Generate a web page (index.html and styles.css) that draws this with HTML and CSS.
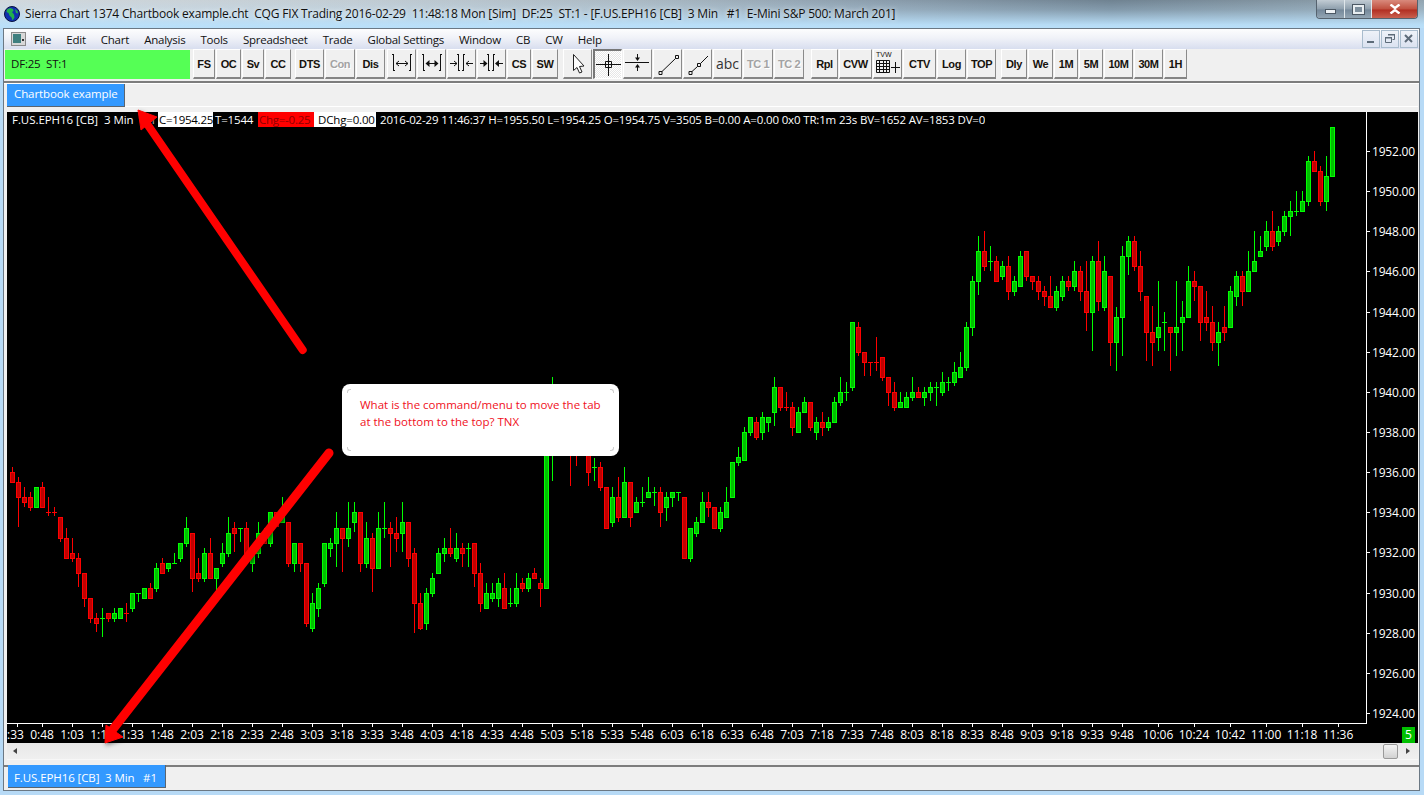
FILE: index.html
```html
<!DOCTYPE html>
<html lang="en">
<head>
<meta charset="utf-8">
<title>Sierra Chart</title>
<link rel="stylesheet" href="styles.css">
</head>
<body>
<div class="window">
  <header class="titlebar">
    <svg class="globe" viewBox="0 0 16 16" width="16" height="16"><circle cx="8" cy="8" r="7.500" fill="#1030b0"/><path d="M3 3.500 6 2l3 1 .5 2-1.500 1 2 2.500 .5 3-2 3-1-3-2-2-1-2.500-2-1z" fill="#22b14c"/><path d="M11 3l2.500 2 .5 2.500-2-.5z" fill="#22b14c"/><circle cx="8" cy="8" r="7.500" fill="none" stroke="#071040"/></svg>
    <span class="title-text">Sierra Chart 1374 Chartbook example.cht  CQG FIX Trading 2016-02-29  11:48:18 Mon [Sim]  DF:25  ST:1 - [F.US.EPH16 [CB]  3 Min   #1  E-Mini S&amp;P 500: March 201]</span>
    <div class="caption">
      <div class="cap cap-min"><i class="glyph-min"></i></div>
      <div class="cap cap-max"><i class="glyph-max"></i></div>
      <div class="cap cap-close">
        <svg viewBox="0 0 12 10" width="12" height="10"><path d="M1.500 .5 6 4 10.500 .5M1.500 9.500 6 6 10.500 9.500" fill="none" stroke="#fff" stroke-width="2.400"/></svg>
      </div>
    </div>
  </header>

  <div class="frame">
    <nav class="menubar">
      <svg class="sysicon" viewBox="0 0 15 14" width="15" height="14"><rect x=".5" y=".5" width="14" height="13" fill="#d8d8d8" stroke="#8a8a8a"/><rect x="2" y="2" width="8" height="9" fill="#3f7f7f"/><rect x="11" y="7" width="2" height="2" fill="#333"/></svg>
      <span class="menu">File</span><span class="menu">Edit</span><span class="menu">Chart</span><span class="menu">Analysis</span><span class="menu">Tools</span><span class="menu">Spreadsheet</span><span class="menu">Trade</span><span class="menu">Global Settings</span><span class="menu">Window</span><span class="menu">CB</span><span class="menu">CW</span><span class="menu">Help</span>
      <div class="mdi">
        <div class="mdi-btn"><svg viewBox="0 0 16 16" width="16" height="16"><rect x="4" y="10" width="7" height="2" fill="#5d6b79"/></svg></div>
        <div class="mdi-btn"><svg viewBox="0 0 16 16" width="16" height="16"><path d="M6.500 3.500h6v5h-2M3.500 6.500h6v5h-6z" fill="none" stroke="#5d6b79"/><path d="M6 3h7v1.500H6zM3 6h7v1.500H3z" fill="#5d6b79"/></svg></div>
        <div class="mdi-btn"><svg viewBox="0 0 16 16" width="16" height="16"><path d="M4 4l7 7M11 4l-7 7" stroke="#5d6b79" stroke-width="2"/></svg></div>
      </div>
    </nav>

    <div class="toolbar">
      <div class="status">DF:25  ST:1</div>
      <div class="btn w22 g1">FS</div><div class="btn w25">OC</div><div class="btn w22">Sv</div><div class="btn w26">CC</div>
      <div class="btn w29 g3">DTS</div><div class="btn w30 off">Con</div><div class="btn w29">Dis</div>
      <div class="btn w29 g1"><svg class="ico" viewBox="0 0 29 29"><path d="M6.500 5v17M5 5.500h1.500M6.500 21.500H8M23.500 5v17M23.500 5.500H25M22 21.500h1.500M9 14.500h12M9 14.500l3-2.500M9 14.500l3 2.500M21 14.500l-3-2.500M21 14.500l-3 2.500" /></svg></div>
      <div class="btn w29"><svg class="ico" viewBox="0 0 29 29"><path d="M6.500 5v17M5 5.500h1.500M6.500 21.500H8M23.500 5v17M23.500 5.500H25M22 21.500h1.500M10 14.500h10" /><path class="solid" d="M8.500 14.500l4-3.500v7zM21.500 14.500l-4-3.500v7z"/></svg></div>
      <div class="btn w29"><svg class="ico" viewBox="0 0 29 29"><path d="M11.500 5v17M16.500 5v17M10 5.500h1.500M11.500 21.500H13M16.500 5.500H18M15 21.500h1.500M3 14.500h7M10 14.500l-3-2.500M10 14.500l-3 2.500M26 14.500h-7M19 14.500l3-2.500M19 14.500l3 2.500" /></svg></div>
      <div class="btn w29"><svg class="ico" viewBox="0 0 29 29"><path d="M11.500 5v17M16.500 5v17M10 5.500h1.500M11.500 21.500H13M16.500 5.500H18M15 21.500h1.500M3 14.500h5M26 14.500h-5" /><path class="solid" d="M10.500 14.500l-4-3.500v7zM18 14.500l4-3.500v7z"/></svg></div>
      <div class="btn w24">CS</div><div class="btn w26">SW</div>
      <div class="btn w29 g4"><svg class="ico" viewBox="0 0 29 29"><path class="hollow" d="M10.500 5.500v16l3.500-3 2.500 5.500 2.500-1-2.500-5.500 4.500-.5z"/></svg></div>
      <div class="btn w29 pressed"><svg class="ico" viewBox="0 0 29 29"><path d="M2 14.500h25M14.500 4v22M11.500 11.500h6v6h-6z" /></svg></div>
      <div class="btn w29"><svg class="ico" viewBox="0 0 29 29"><path d="M2 13.500h24M14.500 5v6M14.500 16v6" /><path class="solid" d="M14.500 12l-2.500-3.500h5zM14.500 15l-2.500 3.500h5z"/></svg></div>
      <div class="btn w29"><svg class="ico" viewBox="0 0 29 29"><path d="M6 22.500v3h3v-3zM22.500 6.500v3h3v-3zM9 22.500L22.500 9.500" /></svg></div>
      <div class="btn w29"><svg class="ico" viewBox="0 0 29 29"><path d="M6 22.500v3h3v-3zM14.500 14.500v3h3v-3zM9 22.500l5.500-5M17.500 14.500L25 7" /></svg></div>
      <div class="btn w29 abc">abc</div>
      <div class="btn w30 off">TC 1</div><div class="btn w30 off">TC 2</div>
      <div class="btn w27 g6">Rpl</div><div class="btn w33">CVW</div>
      <div class="btn w29 tvw"><span class="tvw-label">TVW</span><svg class="ico" viewBox="0 0 29 29"><path class="grid" d="M3.500 11.500h13M3.500 14.500h13M3.500 17.500h13M3.500 20.500h13M3.500 23.500h13M3.500 11.500v12M6.500 11.500v12M10.500 11.500v12M13.500 11.500v12M16.500 11.500v12M18 18.500h9M22.500 13v11" /></svg></div>
      <div class="btn w33">CTV</div><div class="btn w29">Log</div><div class="btn w29">TOP</div>
      <div class="btn w26 g4">Dly</div><div class="btn w25">We</div><div class="btn w24">1M</div><div class="btn w24">5M</div><div class="btn w29">10M</div><div class="btn w29">30M</div><div class="btn w23">1H</div>
    </div>

    <div class="tabbar">
      <div class="tab">Chartbook example</div>
    </div>

    <section class="chart">
      <div class="plot">
        <svg id="candles" class="candles" viewBox="7 112 1359 611" width="1359" height="611" shape-rendering="crispEdges"></svg>
        <div class="info">
          <span class="seg seg-sym">F.US.EPH16 [CB]  3 Min   #1</span><span class="seg seg-c">C=1954.25</span><span class="seg seg-t">T=1544</span><span class="seg seg-chg">Chg=-0.25</span><span class="seg seg-d">DChg=0.00</span><span class="seg seg-rest">2016-02-29 11:46:37 H=1955.50 L=1954.25 O=1954.75 V=3505 B=0.00 A=0.00 0x0 TR:1m 23s BV=1652 AV=1853 DV=0</span>
        </div>
      </div>
      <div class="prices">
        <span>1952.00</span><span>1950.00</span><span>1948.00</span><span>1946.00</span><span>1944.00</span><span>1942.00</span><span>1940.00</span><span>1938.00</span><span>1936.00</span><span>1934.00</span><span>1932.00</span><span>1930.00</span><span>1928.00</span><span>1926.00</span><span>1924.00</span>
      </div>
      <div class="times">
        <span class="t-first">:33</span><span>0:48</span><span>1:03</span><span>1:18</span><span>1:33</span><span>1:48</span><span>2:03</span><span>2:18</span><span>2:33</span><span>2:48</span><span>3:03</span><span>3:18</span><span>3:33</span><span>3:48</span><span>4:03</span><span>4:18</span><span>4:33</span><span>4:48</span><span>5:03</span><span>5:18</span><span>5:33</span><span>5:48</span><span>6:03</span><span>6:18</span><span>6:33</span><span>6:48</span><span>7:03</span><span>7:18</span><span>7:33</span><span>7:48</span><span>8:03</span><span>8:18</span><span>8:33</span><span>8:48</span><span>9:03</span><span>9:18</span><span>9:33</span><span>9:48</span><span class="t-wide t-break">10:06</span><span class="t-wide">10:24</span><span class="t-wide">10:42</span><span class="t-wide">11:00</span><span class="t-wide">11:18</span><span class="t-wide">11:36</span>
        <b class="badge">5</b>
      </div>
    </section>

    <div class="scrollbar">
      <i class="arrow-l"></i>
      <div class="thumb"></div>
      <i class="arrow-r"></i>
    </div>

    <div class="bottomtabs">
      <div class="tab tab-bottom">F.US.EPH16 [CB]  3 Min   #1</div>
    </div>
  </div>

  <aside class="bubble">
    <i class="c c1"></i><i class="c c2"></i><i class="c c3"></i><i class="c c4"></i>
    <p>What is the command/menu to move the tab<br>at the bottom to the top? TNX</p>
  </aside>

  <svg class="arrows" viewBox="0 0 1424 795" width="1424" height="795">
    <path class="shaft" d="M302.700 350 143 118"/>
    <path class="head" d="M138 110 141 130 157 117z"/>
    <path class="shaft shaft-thick" d="M329 453 110 733"/>
    <path class="head" d="M105 743 106 725 123 737z"/>
  </svg>
</div>
<script src="chart.js"></script>
</body>
</html>
```
FILE: styles.css
```css
* { box-sizing: border-box; }
html, body { margin: 0; padding: 0; }
body { width: 1424px; height: 795px; overflow: hidden; font-family: "Open Sans", "Liberation Sans", sans-serif; font-size: 11.4px; color: #111; }

.window { position: relative; width: 1424px; height: 795px; display: flex; flex-direction: column; background: #b7daf6; }

/* Title bar */
.titlebar {
  position: relative; flex: none; height: 28px; display: flex; align-items: center; padding: 0 0 0 4px;
  background:
    linear-gradient(to bottom, rgba(190,226,250,0) 0, rgba(190,226,250,.25) 35%, rgba(186,224,250,.95) 88%, #b9dff9 100%),
    linear-gradient(to right, #d2d8dc 0, #c2ccd3 25%, #aab8c2 45%, #8a9cab 62%, #6f8291 78%, #7f919e 88%, #93a5b1 100%);
}
.globe { flex: none; margin-top: -1px; }
.title-text { margin-left: 5px; margin-top: -1px; white-space: pre; font-size: 12px; color: #101010; text-shadow: 0 0 5px rgba(255,255,255,.9); letter-spacing: -.19px; }
.caption { position: absolute; top: 0; right: 6px; height: 19px; display: flex; border: 1px solid #55626e; border-top: 0; border-radius: 0 0 4px 4px; overflow: hidden; }
.cap { height: 18px; display: flex; align-items: center; justify-content: center; background: linear-gradient(to bottom, #c2ccd4, #8e9fad 50%, #75889a 55%, #93a5b3); border-right: 1px solid #dfe6ea; }
.cap-min { width: 28px; }
.cap-max { width: 27px; }
.cap-close { width: 45px; border-right: 0; background: linear-gradient(to bottom, #d98a7c, #c0503f 50%, #b22f22 55%, #c9604f); }
.glyph-min { width: 11px; height: 5px; margin-top: 5px; background: #eef2f5; border: 1px solid #4c5864; }
.glyph-max { width: 11px; height: 9px; border: 2px solid #e8edf0; outline: 1px solid #4c5864; background: #7e8f9d; }

/* MDI frame */
.frame { flex: none; width: 1417px; height: 763px; margin-left: 3px; display: flex; flex-direction: column; background: #f0f0f0; border: 1px solid #6b7884; }

.menubar { flex: none; height: 20px; display: flex; align-items: center; position: relative; padding-left: 7px; white-space: nowrap; font-size: 11.5px; letter-spacing: -.25px; background: linear-gradient(to bottom, #fdfdfe, #f0f2f8 45%, #d8deef 100%); }
.sysicon { flex: none; margin-right: 8px; }
.menu { color: #111; }
.menu + .menu { margin-left: 15.1px; }
.mdi { position: absolute; right: 1px; top: 1px; display: flex; gap: 1px; }
.mdi-btn { width: 18px; height: 18px; border: 1px solid #a9bccd; background: linear-gradient(to bottom, #eef2f8, #dbe2f0); display: flex; align-items: center; justify-content: center; }

/* Toolbar */
.toolbar { flex: none; height: 34px; padding: 0 0 0 1px; display: flex; gap: 1px; align-items: flex-start; border-bottom: 2px solid #7d7d7d; box-shadow: 0 1px 0 #fff; }
.status { flex: none; width: 185px; height: 29px; margin: 1px 1px 0 0; padding: 0 0 0 6px; line-height: 27px; white-space: pre; font-size: 11.5px; letter-spacing: -.2px; background: #55ff55; color: #111; }
.btn { position: relative; flex: none; height: 30px; display: flex; align-items: center; justify-content: center; font-family: "Liberation Sans", Arial, sans-serif; font-weight: 700; font-size: 11px; letter-spacing: -.4px; color: #16120c; background: #f0f0f0; border-top: 1px solid #fff; border-left: 1px solid #fff; border-right: 1px solid #8a8a8a; border-bottom: 2px solid #858585; white-space: nowrap; }
.w22 { width: 22px; } .w23 { width: 23px; } .w24 { width: 24px; } .w25 { width: 25px; } .w26 { width: 26px; } .w27 { width: 27px; } .w29 { width: 29px; } .w30 { width: 30px; } .w33 { width: 33px; }
.g1 { margin-left: 1px; } .g3 { margin-left: 3px; } .g4 { margin-left: 4px; } .g6 { margin-left: 6px; }
.off { color: #a3a3a3; text-shadow: 1px 1px 0 #fff; }
.abc { font-family: "Open Sans", sans-serif; font-weight: 400; font-size: 14px; letter-spacing: 0; color: #333; }
.pressed { border: 1px solid #fff; border-top: 2px solid #777; border-left: 2px solid #777; background-color: #fff; background-image: conic-gradient(#e6e6e6 25%, transparent 0 50%, #e6e6e6 0 75%, transparent 0); background-size: 2px 2px; }
.ico { position: absolute; left: -1px; top: -1px; width: 29px; height: 29px; fill: none; stroke: #111; stroke-width: 1; }
.ico .solid { fill: #111; stroke: none; }
.ico .hollow { fill: #fff; stroke: #222; }
.tvw-label { position: absolute; left: 2px; top: 1px; font-size: 7px; line-height: 8px; font-weight: 400; letter-spacing: 0; font-family: "Liberation Sans", sans-serif; }

/* Tabs */
.tabbar { flex: none; height: 29px; padding: 1px 0 0 3px; margin-bottom: 0; position: relative; display: flex; align-items: flex-start; }
.tabbar::after { content: ""; position: absolute; left: 3px; right: 1px; top: 23px; height: 1px; background: #fff; }
.tab { height: 23px; padding: 0 7px; line-height: 20px; font-size: 11.5px; letter-spacing: -.1px; color: #fff; background: #3399ff; border-right: 1px solid #5b6570; border-bottom: 1px solid #5b6570; white-space: pre; position: relative; z-index: 1; }
.tabbar .tab { width: 118px; }

/* Chart */
.chart { flex: none; width: 1411px; height: 631px; margin-left: 3px; background: #000; color: #fff; display: grid; grid-template-columns: 1360px 51px; grid-template-rows: 612px 19px; font-size: 12px; }
.plot { position: relative; grid-column: 1; grid-row: 1; border-right: 1px solid #fff; border-bottom: 1px solid #fff; overflow: hidden; }
.candles { position: absolute; left: 0; top: 0; display: block; }
.info { position: relative; display: flex; height: 15px; line-height: 15px; white-space: pre; font-size: 11.5px; letter-spacing: -.16px; }
.seg { flex: none; overflow: hidden; }
.seg-sym { width: 151px; padding-left: 5px; letter-spacing: -.05px; }
.seg-c { width: 55px; padding-left: 1px; letter-spacing: -.25px; background: #fff; color: #000; }
.seg-t { width: 45px; padding-left: 2px; }
.seg-chg { width: 56px; padding-left: 1px; letter-spacing: -.25px; background: #f00; color: #8c0000; }
.seg-d { width: 62px; padding-left: 4px; background: #fff; color: #000; }
.seg-rest { padding-left: 4px; }

.prices { grid-column: 2; grid-row: 1; padding-top: 19px; display: flex; flex-direction: column; letter-spacing: -.2px; }
.prices span { flex: none; height: 40.15px; line-height: 42px; padding-left: 5px; position: relative; }
.prices span::before { content: ""; position: absolute; left: 0; top: 20px; width: 3px; height: 1px; background: #fff; }

.times { grid-column: 1 / 3; grid-row: 2; display: flex; position: relative; white-space: nowrap; }
.times span { flex: none; width: 30px; text-align: center; line-height: 22px; position: relative; }
.times span::before { content: ""; position: absolute; left: 50%; top: 0; width: 1px; height: 3px; background: #fff; }
.times .t-first { width: 20px; text-align: left; }
.times .t-wide { width: 36px; }
.times .t-break { margin-left: 3px; }
.badge { position: absolute; right: 3px; top: 3px; width: 13px; height: 16px; line-height: 16px; font-weight: 400; text-align: center; background: #00c000; color: #fff; }

/* Scrollbar */
.scrollbar { flex: none; height: 17px; margin: 0 1px 0 3px; position: relative; display: flex; align-items: center; background: linear-gradient(to bottom, #e8e8e8, #f0f0f0); border-bottom: 1px solid #f7f7f7; }
.arrow-l { width: 0; height: 0; margin-left: 6px; border: 3px solid transparent; border-left: 0; border-right: 4px solid #444; }
.thumb { margin-left: auto; width: 15px; height: 15px; background: linear-gradient(to bottom, #f4f4f4, #d2d2d2); border: 1px solid #9a9a9a; border-radius: 2px; }
.arrow-r { width: 0; height: 0; margin: 0 8px; border: 3px solid transparent; border-right: 0; border-left: 4px solid #444; }

.bottomtabs { flex: 1; position: relative; margin-top: 5px; padding-left: 4px; border-top: 2px solid #7d7d7d; display: flex; align-items: flex-start; }
.tab-bottom { width: 158px; height: 23px; margin-top: -2px; padding: 0 6px; line-height: 25px; }

/* Annotation */
.bubble { position: absolute; left: 342px; top: 384px; width: 277px; height: 72px; background: #fff; border-radius: 8px; color: #f0101c; font-size: 11.5px; line-height: 17px; padding: 12px 18px; }
.bubble p { margin: 0; white-space: nowrap; }
.c { position: absolute; width: 4px; height: 4px; border: 0 solid #cfcfcf; }
.c1 { left: 5px; top: 5px; border-width: 1px 0 0 1px; border-top-left-radius: 3px; }
.c2 { right: 5px; top: 5px; border-width: 1px 1px 0 0; border-top-right-radius: 3px; }
.c3 { left: 5px; bottom: 5px; border-width: 0 0 1px 1px; border-bottom-left-radius: 3px; }
.c4 { right: 5px; bottom: 5px; border-width: 0 1px 1px 0; border-bottom-right-radius: 3px; }

.arrows { position: absolute; left: 0; top: 0; pointer-events: none; filter: drop-shadow(1px 2px 2px rgba(0,0,0,.45)); }
.shaft { fill: none; stroke: #f00; stroke-width: 8; stroke-linecap: round; }
.shaft-thick { stroke-width: 9; }
.head { fill: #f00; stroke: #f00; stroke-width: 1; stroke-linejoin: round; }
```
FILE: chart.js
```js
// Candles: [colour (0 red, 1 green), high, bodyTop, bodyBottom, low].
// Each run of rows carries the y origin it was measured from; values are in thirds of a pixel.
var runs = [
  [460, [
    [0,22,37,67,67],[0,52,67,112,203],[0,82,112,127,142],[0,97,112,142,155],[1,82,82,142,142],[0,67,82,142,142],[0,112,157,157,170],[0,142,157,157,170],
    [0,172,172,235,248],[0,205,235,295,295],[0,235,280,295,308],[0,280,295,340,383],[0,340,340,415,443],[0,415,415,475,490],[0,460,475,490,518],[1,445,475,475,533],
    [0,460,460,475,488],[1,445,460,475,488],[1,445,445,475,475],[0,430,460,460,488],[1,400,400,445,458],[1,400,400,400,428],[1,385,385,415,415],[0,370,385,415,415],
    [1,310,325,385,398],[0,295,310,340,340],[1,310,310,325,338],[1,280,310,310,310],[1,250,250,295,308],[1,172,205,250,263],[0,220,220,355,398],[0,295,340,355,368],
    [1,265,280,355,368],[0,235,280,355,355],[1,325,325,355,398],[1,250,280,310,323],[1,172,220,280,293],[0,187,205,220,278],[1,205,205,205,248],[0,187,205,300,300],
    [1,280,280,310,338],[1,187,220,280,295],[0,205,220,250,250],[1,157,157,250,263],[0,157,157,200,200],[1,112,157,187,190],[0,187,187,310,323],[1,250,250,310,338],
    [0,250,250,310,338],[0,310,310,490,503],[1,400,430,505,518],[1,370,385,445,473],[1,250,250,370,383],[1,235,250,265,293],[1,157,205,250,323]
  ]],
  [370, [
    [0,475,475,505,608],[1,397,475,505,533],[1,397,427,457,488],[0,427,427,580,608],[1,457,505,580,595],[0,490,505,595,668],[1,427,475,595,595],[1,397,475,475,505],
    [0,457,475,490,593],[0,443,490,505,548],[1,397,457,490,548],[0,457,457,565,593],[0,535,550,700,790],[0,670,700,775,780],[1,655,670,760,780],[1,610,625,670,683],
    [1,535,550,610,610],[1,505,535,550,578],[0,475,535,550,563],[1,490,535,565,578],[0,520,535,550,593],[1,520,535,535,593],[0,520,520,610,653],[0,580,610,700,728],
    [1,640,670,715,715],[1,640,670,685,698],[1,625,640,685,713],[0,610,655,715,715],[1,655,700,700,713],[1,610,655,700,713],[0,625,640,655,668],[1,610,625,655,668],
    [0,595,610,625,625],[0,625,640,655,713],[1,180,180,655,655],[1,22,60,100,335],null,null,[0,200,200,240,350],[0,200,200,240,290],null,[0,200,220,307,350],
    [1,265,292,292,335],[0,278,292,352,365],[0,352,352,475,475],[1,352,382,457,473],[0,322,382,443,457],[1,292,337,443,443],[0,337,337,443,473],[1,382,397,428,428],
    [1,352,397,397,412],[1,322,367,382,382],[1,352,367,367,410],[0,352,367,428,473],[1,367,382,412,455],[1,367,367,382,412],[1,367,367,367,395],[0,382,382,565,565],
    [1,475,475,565,578],[1,443,457,490,503],[1,367,397,457,457],[0,367,397,412,443],[0,412,412,475,475],[1,412,428,475,488],[1,352,397,443,443],[1,277,277,383,383],
    [1,232,262,277,290]
  ]],
  [220, [
    [1,622,637,720,720],[1,592,592,637,650],[0,592,607,652,660],[1,577,592,637,660],[1,592,592,607,636],[1,472,502,577,620],[0,502,502,562,575],[0,517,562,562,575],
    [0,547,562,622,650],[1,562,577,637,637],[1,532,547,577,577],[0,547,547,622,635],[1,592,607,637,660],[0,577,607,622,650],[1,592,607,622,635],[1,532,547,607,607],
    [1,472,517,547,560],[1,487,517,517,545],[1,307,307,502,515],[0,307,322,397,410],[0,397,397,427,470],[0,427,427,427,470],[0,352,427,427,455],[0,412,412,472,485],
    [0,472,472,517,560],[0,487,517,562,575],[1,517,547,562,562],[1,517,532,562,562],[1,472,517,532,545],[0,502,517,532,532],[1,502,517,532,560],[1,487,502,517,545],
    [1,487,502,502,560],[1,457,487,517,530],[1,472,487,487,515],[1,427,457,487,500],[1,397,442,472,472],[1,307,322,442,455],[1,168,184,322,350],[1,48,94,184,227],
    [0,34,94,139,153],[1,78,124,124,153],[0,109,124,184,184],[1,124,139,169,182],[0,109,139,214,242],[1,169,184,214,228],[1,94,109,199,199],[0,94,94,169,183],
    [0,169,169,184,212],[0,169,184,214,242],[0,198,214,229,260],[0,168,229,262,262],[1,198,214,262,275]
  ]],
  [120, [
    [1,468,485,530,543],[0,468,485,500,513],[1,423,455,500,513],[0,438,455,515,543],[0,423,515,578,635],[1,408,424,578,695],[0,363,424,545,575],[1,408,455,562,575],
    [0,470,470,668,740],[1,562,592,668,755],[1,378,410,592,710],[1,348,364,410,467],[0,348,364,440,453],[0,393,440,515,543],[0,530,530,638,725],[0,560,638,668,740],
    [1,483,623,653,695],[1,577,607,607,695],[0,623,623,638,755],[1,483,623,638,710],[1,543,592,607,695],[1,438,485,592,592],[0,453,485,500,543],[0,500,500,608,665],
    [0,513,592,607,635],[0,560,607,668,695],[1,607,638,668,740],[0,560,623,638,665],[1,498,515,622,622],[1,453,470,530,560],[0,453,470,515,560],[1,393,455,515,515],
    [1,333,424,455,455],[1,348,394,409,409],[1,303,334,380,393],[0,273,334,380,393],[1,318,334,364,378],[1,273,289,334,348],[1,243,274,289,348],[1,213,274,274,288],
    [1,213,244,274,274],[1,108,124,244,258],[0,93,124,154,154],[0,138,154,244,258],[1,108,169,244,273],[1,21,21,169,169]
  ]]
];

var svg = document.getElementById('candles');
var NS = 'http://www.w3.org/2000/svg';
var colours = [{ line: '#ff0000', fill: '#c00000' }, { line: '#00ff00', fill: '#00c000' }];

function rect(x, y, w, h, fill) {
  var r = document.createElementNS(NS, 'rect');
  r.setAttribute('x', x);
  r.setAttribute('y', y);
  r.setAttribute('width', w);
  r.setAttribute('height', h);
  r.setAttribute('fill', fill);
  svg.appendChild(r);
}

var index = 0;
runs.forEach(function (run) {
  var origin = run[0];
  run[1].forEach(function (bar) {
    var cx = 12 + 6 * index;
    index += 1;
    if (!bar) return;
    var c = colours[bar[0]];
    var toY = function (v) { return Math.floor(origin + v / 3); };
    var high = toY(bar[1]), top = toY(bar[2]), bottom = toY(bar[3]), low = toY(bar[4]);
    rect(cx, high, 1, Math.max(low - high, 1), c.line);
    if (bottom - top < 1) {
      rect(cx - 2, top, 5, 1, c.line);
    } else {
      rect(cx - 2, top, 5, bottom - top + 1, c.line);
      if (bottom - top > 1) rect(cx - 1, top + 1, 3, bottom - top - 1, c.fill);
    }
  });
});
```
